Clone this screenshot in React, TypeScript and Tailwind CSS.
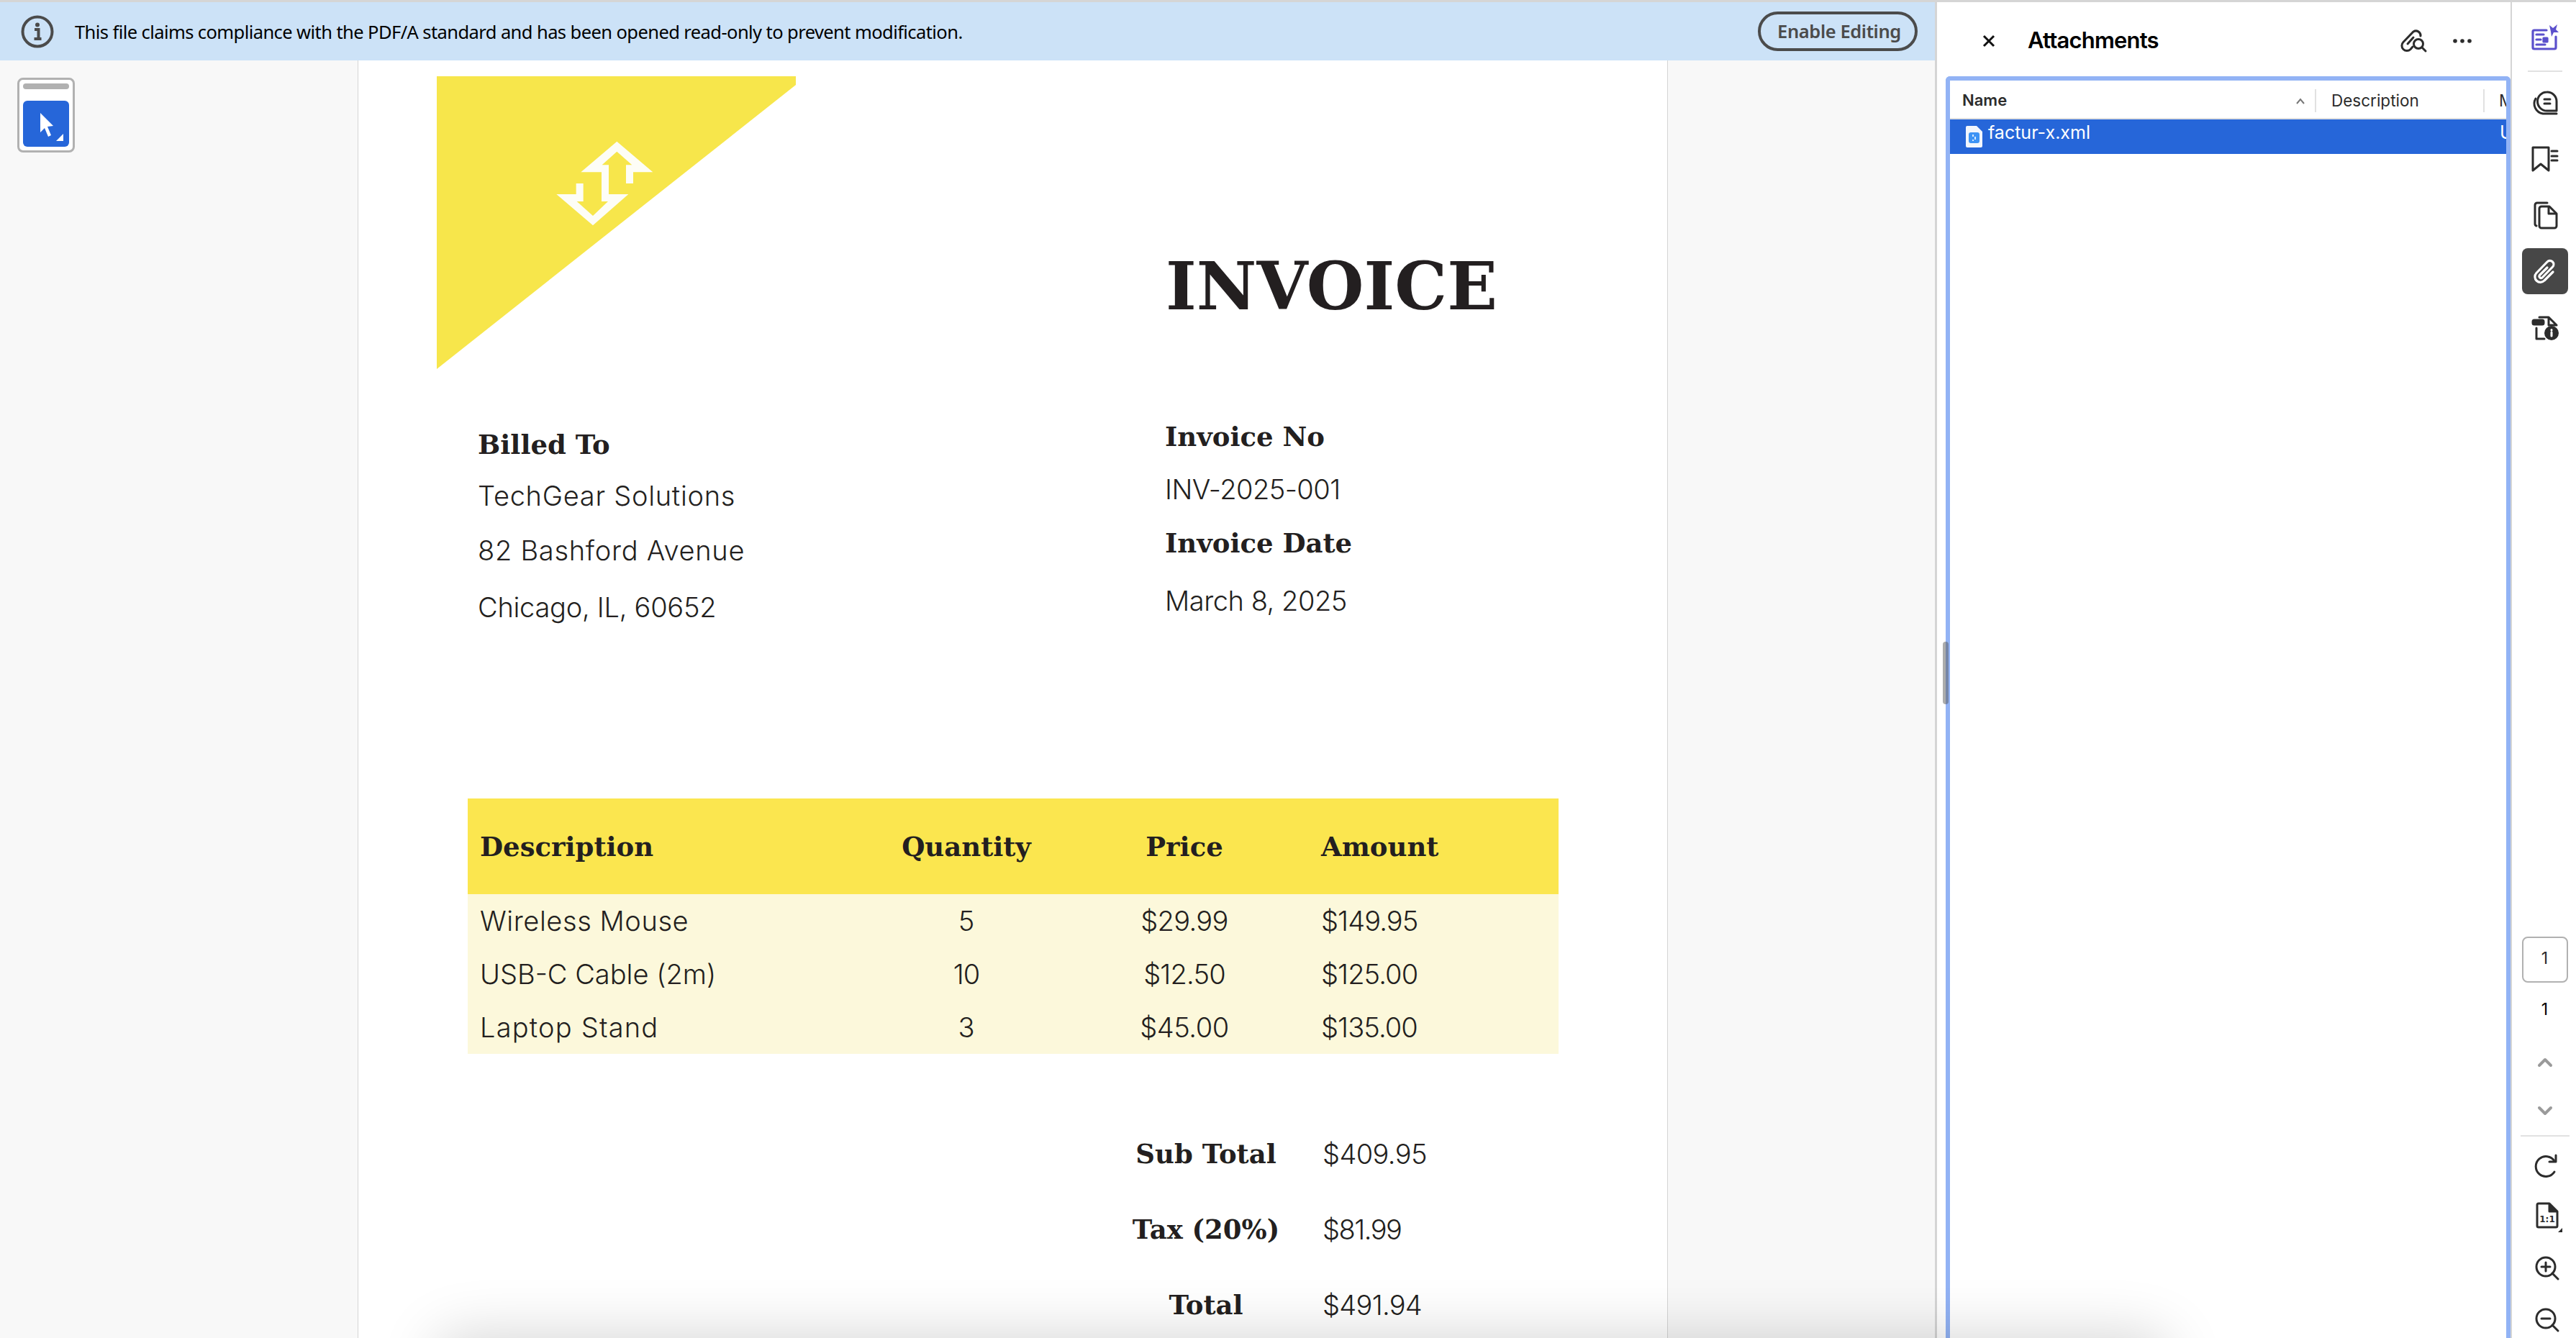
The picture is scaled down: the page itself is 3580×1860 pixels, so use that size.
import React from 'react';

const serif = "font-['DejaVu_Serif',serif] font-bold text-[#231f20]";
const body = "font-['Inter',sans-serif] font-light text-[#231f20] text-[38px]";
const ui = "font-['Noto_Sans',sans-serif]";
const panelFont = "font-['Inter',sans-serif]";

// tracking per string: Inter's letters run narrower and its digits wider than the PDF's font
const rows = [
  [
    { t: 'Wireless Mouse', c: 'tracking-[0.57px]' },
    { t: '5', c: '' },
    { t: '$29.99', c: 'tracking-[-0.66px]' },
    { t: '$149.95', c: 'tracking-[-0.9px]' },
  ],
  [
    { t: 'USB-C Cable (2m)', c: 'tracking-[0px]' },
    { t: '10', c: 'tracking-[-1px]' },
    { t: '$12.50', c: 'tracking-[-0.8px]' },
    { t: '$125.00', c: 'tracking-[-0.9px]' },
  ],
  [
    { t: 'Laptop Stand', c: 'tracking-[1.2px]' },
    { t: '3', c: '' },
    { t: '$45.00', c: 'tracking-[-0.4px]' },
    { t: '$135.00', c: 'tracking-[-0.9px]' },
  ],
];

const totals = [
  { label: 'Sub Total', value: '$409.95', c: 'tracking-[-0.6px]' },
  { label: 'Tax (20%)', value: '$81.99', c: 'tracking-[-1.5px]' },
  { label: 'Total', value: '$491.94', c: 'tracking-[-0.7px]' },
];

function Icon({ children, color = '#2c2c2c', width = 3 }: { children: React.ReactNode; color?: string; width?: number }) {
  return (
    <svg width="48" height="48" viewBox="0 0 48 48" fill="none" stroke={color} strokeWidth={width} strokeLinecap="round" strokeLinejoin="round">
      {children}
    </svg>
  );
}

function RailCell({ children, active }: { children: React.ReactNode; active?: boolean }) {
  return (
    <div className={`w-[64px] h-[64px] flex items-center justify-center rounded-[8px] ${active ? 'bg-[#474747]' : ''}`}>
      {children}
    </div>
  );
}

function Logo() {
  return (
    <svg width="499" height="407" viewBox="0 0 499 407" className="shrink-0">
      <polygon points="0,0 499,0 499,12 0,407" fill="#f7e64b" />
      <g transform="translate(93 44) scale(0.3333)">
        <polygon
          fill="#fdfdf6"
          points="472,140 622,268 540,268 540,315 510,315 510,238 535,238 472,182 410,238 438,238 438,360 520,360 372,490 220,360 302,360 302,315 332,315 332,390 305,390 372,450 435,390 408,390 408,268 322,268"
        />
      </g>
    </svg>
  );
}

function Banner() {
  return (
    <div className="h-[81px] bg-[#cce2f7] flex items-center shrink-0">
      <svg width="46" height="46" viewBox="0 0 46 46" fill="none" className="ml-[29px] shrink-0">
        <circle cx="23" cy="23" r="20.5" stroke="#4b4b4b" strokeWidth="4" />
        <circle cx="23" cy="13.5" r="3" fill="#4b4b4b" />
        <path d="M19 20h5.5v12M18.5 33h10" stroke="#4b4b4b" strokeWidth="4" />
      </svg>
      <span className={`${ui} ml-[29px] pt-px text-[25.5px] tracking-[-0.58px] text-black whitespace-nowrap`}>
        This file claims compliance with the PDF/A standard and has been opened read-only to prevent modification.
      </span>
      <button className={`${ui} ml-auto mr-[24px] w-[222px] h-[55px] pl-[4px] rounded-full border-[4px] border-[#4b4b4b] text-[#4b4b4b] font-semibold text-[25.5px] tracking-[-0.4px] whitespace-nowrap`}>
        Enable Editing
      </button>
    </div>
  );
}

function ToolPanel() {
  return (
    <div className="w-[497px] shrink-0 bg-[#f8f8f8] pl-[24px] pt-[24px]">
      <div className="w-[80px] h-[104px] bg-white border-[3px] border-[#b1b1b1] rounded-[8px] px-[5px] pt-[5px]">
        <div className="h-[8px] rounded-full bg-[#b1b1b1]" />
        <div className="mt-[16px] h-[64px] rounded-[6px] bg-[#2666d9] relative">
          <svg width="64" height="64" viewBox="0 0 64 64">
            <path d="M24 17l18 18-8 1 5 12-4 2-5-12-6 6z" fill="#fff" />
            <path d="M56 46v10H46z" fill="#fff" />
          </svg>
        </div>
      </div>
    </div>
  );
}

function InvoicePage() {
  return (
    <div className="w-[1821px] shrink-0 bg-white border-x border-[#d5d5d5] pt-[22px] overflow-hidden">
      <div className="flex items-start ml-[109px]">
        <Logo />
        <div className={`${serif} ml-[514px] mt-[242px] text-[91.5px] leading-[100px] whitespace-nowrap`}>INVOICE</div>
      </div>

      <div className="flex ml-[166px]">
        <div className="w-[955px]">
          <div className={`${serif} mt-[80px] text-[37px] leading-[50px]`}>Billed To</div>
          <div className={`${body} tracking-[0.72px] mt-[21px] leading-[50px]`}>TechGear Solutions</div>
          <div className={`${body} tracking-[0.72px] mt-[26px] leading-[50px]`}>82 Bashford Avenue</div>
          <div className={`${body} tracking-[-0.27px] mt-[29px] leading-[50px]`}>Chicago, IL, 60652</div>
        </div>
        <div>
          <div className={`${serif} mt-[69px] text-[37px] leading-[50px]`}>Invoice No</div>
          <div className={`${body} tracking-[-0.55px] mt-[23px] leading-[50px]`}>INV-2025-001</div>
          <div className={`${serif} mt-[25px] text-[37px] leading-[50px]`}>Invoice Date</div>
          <div className={`${body} tracking-[-0.46px] mt-[30px] leading-[50px]`}>March 8, 2025</div>
        </div>
      </div>

      <div className="ml-[152px] mt-[241px] w-[1516px]">
        <div className="grid grid-cols-[550px_286px_320px_360px] h-[133px] items-center bg-[#fbe64f]">
          <div className={`${serif} pl-[17px] pt-[2px] text-[37px]`}>Description</div>
          <div className={`${serif} pt-[2px] text-center text-[37px]`}>Quantity</div>
          <div className={`${serif} pt-[2px] text-center text-[37px]`}>Price</div>
          <div className={`${serif} pl-[30px] pt-[2px] text-[37px]`}>Amount</div>
        </div>
        <div className="bg-[#fcf8db]">
          {rows.map((r) => (
            <div key={r[0].t} className="grid grid-cols-[550px_286px_320px_360px] h-[74px] items-center">
              <div className={`${body} ${r[0].c} pl-[17px]`}>{r[0].t}</div>
              <div className={`${body} ${r[1].c} text-center`}>{r[1].t}</div>
              <div className={`${body} ${r[2].c} text-center`}>{r[2].t}</div>
              <div className={`${body} ${r[3].c} pl-[30px]`}>{r[3].t}</div>
            </div>
          ))}
        </div>
      </div>

      <div className="ml-[1038px] mt-[87px]">
        {totals.map((t) => (
          <div key={t.label} className="flex items-center h-[105px]">
            <div className={`${serif} w-[280px] text-center text-[37px]`}>{t.label}</div>
            <div className={`${body} ${t.c} ml-[22px]`}>{t.value}</div>
          </div>
        ))}
      </div>
    </div>
  );
}

function AttachmentsPanel() {
  return (
    <div className="w-[800px] shrink-0 border-l-[3px] border-[#d5d5d5] bg-white flex flex-col">
      <div className="h-[103px] pt-[4px] flex items-center shrink-0">
        <svg width="18" height="18" viewBox="0 0 18 18" fill="none" stroke="#111" strokeWidth="3" className="ml-[63px]">
          <path d="M2 2l14 14M16 2L2 16" />
        </svg>
        <span className={`${panelFont} ml-[45px] text-[31px] font-semibold tracking-[-0.8px] text-black`}>Attachments</span>
        <svg width="38" height="38" viewBox="0 0 38 38" fill="none" stroke="#2c2c2c" strokeWidth="3" strokeLinecap="round" className="ml-auto">
          <path d="M17 27l-3 3.5a7 7 0 0 1-10-10L18 6a6.5 6.5 0 0 1 10 6" />
          <path d="M18 14l-8 9" />
          <circle cx="25" cy="23" r="6.5" />
          <path d="M30 28l5 5" />
        </svg>
        <svg width="26" height="6" viewBox="0 0 26 6" fill="#2c2c2c" className="ml-[35px] mr-[54px]">
          <circle cx="3" cy="3" r="2.8" />
          <circle cx="13" cy="3" r="2.8" />
          <circle cx="23" cy="3" r="2.8" />
        </svg>
      </div>

      <div className="ml-[12px] flex-1 border-[6px] border-b-0 border-[#92b3f5] rounded-t-[6px] overflow-hidden bg-white">
        <div className={`${panelFont} flex items-center h-[54px] pt-[3px] border-b-[2px] border-[#e1e1e1] text-[22.5px] text-[#2c2c2c]`}>
          <div className="w-[509px] shrink-0 h-[32px] flex items-center border-r-[2px] border-[#e1e1e1] pl-[17px] relative">
            <span className="font-semibold text-[22px]">Name</span>
            <svg width="14" height="10" viewBox="0 0 14 10" fill="none" stroke="#777" strokeWidth="2" className="absolute left-[480px] top-[12px]">
              <path d="M2 8l5-6 5 6" />
            </svg>
          </div>
          <div className="w-[234px] shrink-0 h-[32px] flex items-center border-r-[2px] border-[#e1e1e1] pl-[21px] whitespace-nowrap">Description</div>
          <div className="pl-[20px] whitespace-nowrap">Modified</div>
        </div>
        <div className={`${panelFont} flex items-start h-[48px] bg-[#2666d9] text-white text-[25px] overflow-hidden whitespace-nowrap`}>
          <svg width="26" height="30" viewBox="0 0 26 30" className="ml-[21px] mt-[9px] shrink-0">
            <path d="M3 0h13l8 8v20a2 2 0 0 1-2 2H3a2 2 0 0 1-2-2V2a2 2 0 0 1 2-2z" fill="#f2f6fd" />
            <rect x="5" y="9" width="15" height="15" rx="3" fill="#3d93f5" />
            <path d="M11 12v3M14 15v4M11 19v2" stroke="#d5e8ff" strokeWidth="2" />
          </svg>
          <span className="ml-[6px] leading-[36px] w-[711px] shrink-0">factur-x.xml</span>
          <span className="leading-[36px]">Unknown</span>
        </div>
      </div>
    </div>
  );
}

function Rail() {
  return (
    <div className="w-[91px] shrink-0 border-l-[2px] border-[#d5d5d5] bg-white flex flex-col items-center pl-[2px]">
      <div className="mt-[18px] h-[64px] flex items-center">
        <Icon color="#5b50cc" width={3.2}>
          <path d="M26 13H9a2 2 0 0 0-2 2v22a2 2 0 0 0 2 2h28a2 2 0 0 0 2-2V22" />
          <path d="M12 19h10M12 26h6M12 33h12" />
          <rect x="22" y="24" width="5" height="5" fill="#5b50cc" />
          <path d="M30 6l5 4 6-5-2 7 4 4-7 0-3 6-1-7z" fill="#5b50cc" stroke="none" />
        </Icon>
      </div>
      <div className="mt-[13px] w-[48px] h-[2px] bg-[#e1e1e1]" />
      <div className="mt-[11px] flex flex-col items-center gap-[14px]">
        <RailCell>
          <Icon>
            <path d="M26.5 9a13 13 0 0 0 0 26H40V22A13 13 0 0 0 26.5 9Z" />
            <path d="M23 19h8M23 25h8" />
            <path d="M11 18a14 14 0 0 0 10 21h19" />
          </Icon>
        </RailCell>
        <RailCell>
          <Icon>
            <path d="M7 8h22v32l-11-9-11 9z" />
            <path d="M33 13h8M33 20h8M33 26h8" />
          </Icon>
        </RailCell>
        <RailCell>
          <Icon>
            <path d="M19 12h11l10 10v17a3 3 0 0 1-3 3H19a3 3 0 0 1-3-3V15a3 3 0 0 1 3-3z" />
            <path d="M29 13v9h10" />
            <path d="M27 7H13a3 3 0 0 0-3 3v26a3 3 0 0 0 2 3" />
          </Icon>
        </RailCell>
        <RailCell active>
          <Icon color="#fff" width={3.2}>
            <path d="M35 25L23 37a7.5 7.5 0 0 1-11-10.5L27 11a5 5 0 0 1 7.5 7L20 33a2.5 2.5 0 0 1-3.5-3.5L27 19" />
          </Icon>
        </RailCell>
        <RailCell>
          <Icon>
            <rect x="7" y="14" width="15" height="6" rx="2" fill="#2c2c2c" />
            <path d="M16 10h13l11 11M29 10v11h11M12 25v15h11" />
            <circle cx="33" cy="32" r="8.5" fill="#2c2c2c" />
            <path d="M33 31v5M33 27.5v.5" stroke="#fff" />
          </Icon>
        </RailCell>
      </div>

      <div className="mt-auto flex flex-col items-center pb-px">
        <div className={`${panelFont} w-[64px] h-[64px] pb-[4px] border-[2px] border-[#b1b1b1] rounded-[8px] flex items-center justify-center text-[23px] text-[#2c2c2c]`}>
          1
        </div>
        <div className={`${panelFont} mt-[17px] h-[40px] flex items-center text-[23px] text-black`}>1</div>
        <div className="mt-[34px] h-[40px] flex items-center">
          <svg width="24" height="16" viewBox="0 0 24 16" fill="none" stroke="#9a9a9a" strokeWidth="4" strokeLinecap="round" strokeLinejoin="round">
            <path d="M4 12l8-8 8 8" />
          </svg>
        </div>
        <div className="mt-[27px] h-[40px] flex items-center">
          <svg width="24" height="16" viewBox="0 0 24 16" fill="none" stroke="#9a9a9a" strokeWidth="4" strokeLinecap="round" strokeLinejoin="round">
            <path d="M4 4l8 8 8-8" />
          </svg>
        </div>
        <div className="mt-[14px] w-[68px] h-[2px] bg-[#e1e1e1]" />
        <div className="mt-[17px] h-[50px] flex items-center">
          <Icon>
            <path d="M37 16A14 14 0 1 0 37 31" />
            <path d="M39 8v9h-9" />
          </Icon>
        </div>
        <div className="mt-[17px] h-[50px] flex items-center">
          <svg width="48" height="48" viewBox="0 0 48 48" fill="none" stroke="#2c2c2c" strokeWidth="3" strokeLinejoin="round">
            <path d="M15 8h15l11 11v20a2 2 0 0 1-2 2H15a2 2 0 0 1-2-2V10a2 2 0 0 1 2-2z" />
            <path d="M30 8v11h11" fill="#2c2c2c" />
            <text x="27" y="34" textAnchor="middle" fontFamily="DejaVu Sans" fontWeight="700" fontSize="12" fill="#2c2c2c" stroke="none">1:1</text>
            <path d="M50 40v10H40z" fill="#2c2c2c" stroke="none" />
          </svg>
        </div>
        <div className="mt-[23px] h-[50px] flex items-center">
          <Icon>
            <circle cx="25" cy="23" r="13" />
            <path d="M34 32l8 8M19 23h12M25 17v12" />
          </Icon>
        </div>
        <div className="mt-[22px] h-[50px] flex items-center">
          <Icon>
            <circle cx="25" cy="23" r="13" />
            <path d="M34 32l8 8M19 23h12" />
          </Icon>
        </div>
      </div>
    </div>
  );
}

export default function App() {
  return (
    <div className="relative w-[3580px] h-[1860px] overflow-hidden flex flex-col bg-white">
      <div className="h-[3px] bg-[#d5d5d5] shrink-0" />
      <div className="flex flex-1 min-h-0">
        <div className="w-[2689px] shrink-0 flex flex-col">
          <Banner />
          <div className="flex flex-1 min-h-0">
            <ToolPanel />
            <InvoicePage />
            <div className="flex-1 bg-[#f8f8f8]" />
          </div>
        </div>
        <AttachmentsPanel />
        <Rail />
      </div>

      {/* splitter handle */}
      <div className="absolute left-[2700px] top-[892px] w-[8px] h-[87px] rounded-full bg-[#5a5a5a]/50" />
      {/* shadow of the floating toolbar, sits just below the fold */}
      <div className="absolute left-[620px] top-[1870px] w-[2380px] h-[60px] rounded-[20px] shadow-[0_0_80px_14px_rgba(0,0,0,0.17)]" />
    </div>
  );
}
